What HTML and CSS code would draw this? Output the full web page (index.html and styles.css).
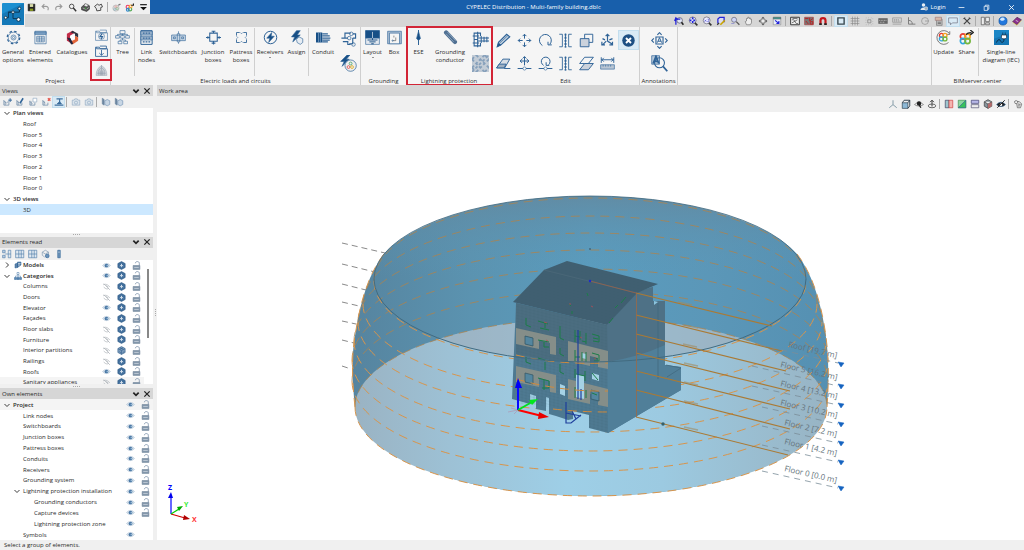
FILE: index.html
```html
<!DOCTYPE html>
<html lang="en">
<head>
<meta charset="utf-8">
<title>CYPELEC Distribution - Multi-family building.dblc</title>
<link rel="stylesheet" href="styles.css">
</head>
<body>
<svg class="defs" aria-hidden="true">
  <symbol id="logo" viewBox="0 0 24 24"><rect width="24" height="24" rx="1" fill="#1c8fd0" stroke="none"/><path d="M0 24V12L24 0v24z" fill="#1579b8" stroke="none"/><path d="M3 16h4V10h12V6h-2M12 10v7h5M7 10h5" stroke="#0c3350"/><g fill="#fff" stroke="#0c3350"><circle cx="4" cy="16" r="1.500"/><circle cx="12" cy="10" r="1.500"/><circle cx="19" cy="6" r="1.500"/><circle cx="18" cy="18" r="2"/></g></symbol>
  <symbol id="save" viewBox="0 0 16 16"><path d="M2 2h12v12H2z" fill="#222" stroke="#222"/><path d="M5 2h6v5H5z" fill="#d8dca8" stroke="none"/><path d="M5 10h6v4H5z" fill="#8a9a20" stroke="none"/></symbol>
  <symbol id="undo" viewBox="0 0 16 16"><path d="M6 2 2 6l4 4M2 6h7c4 0 5 4 3 7" stroke="#9a9a9a" stroke-width="2"/></symbol>
  <symbol id="redo" viewBox="0 0 16 16"><path d="m10 2 4 4-4 4M14 6H7c-4 0-5 4-3 7" stroke="#9a9a9a" stroke-width="2"/></symbol>
  <symbol id="mag" viewBox="0 0 16 16"><circle cx="6.500" cy="6" r="4" stroke="#444" stroke-width="1.600"/><path d="m9.500 9 5 5.500" stroke="#333" stroke-width="2.600"/></symbol>
  <symbol id="print" viewBox="0 0 16 16"><path d="M1 7l5-4 9 2v6l-5 4-9-3z" fill="#555" stroke="#222"/><path d="M5 5l2-4 6 2-2 4z" fill="#eee" stroke="#444"/><path d="M3 9l6 2M10 11l4-3" stroke="#ddd"/><circle cx="8" cy="9" r="1.500" fill="#3a8a3a" stroke="none"/></symbol>
  <symbol id="print2" viewBox="0 0 16 16"><path d="M1 6l5-4 3 2 4-2 2 5-3 1v5l-7 1-1-4z" fill="#e8e8e8" stroke="#333" stroke-width="1.500"/></symbol>
  <symbol id="ball" viewBox="0 0 16 16"><circle cx="7" cy="9" r="5.500" fill="#e0e0e0" stroke="#aaa"/><circle cx="7" cy="7" r="2" stroke="#e88"/><circle cx="9" cy="10" r="2" stroke="#7ab87a"/><circle cx="5" cy="11" r="2" stroke="#7ab"/><path d="M11 4l4-2" stroke="#777" stroke-width="2"/></symbol>
  <symbol id="ball2" viewBox="0 0 16 16"><circle cx="5" cy="7" r="3" stroke="#e36" stroke-width="2"/><circle cx="9" cy="11" r="3" stroke="#5a5" stroke-width="2"/><circle cx="5" cy="12" r="2.500" stroke="#38c" stroke-width="2"/><circle cx="10" cy="6" r="2.500" stroke="#fa3" stroke-width="2"/><path d="M11 4h4V1" stroke="#222" stroke-width="2"/></symbol>
  <symbol id="drop" viewBox="0 0 16 16"><path d="M2 3h12" stroke="#111" stroke-width="2"/><path d="M2 7h12l-6 6z" fill="#111" stroke="none"/></symbol>
  <symbol id="user" viewBox="0 0 16 16"><circle cx="7" cy="4" r="3.500" fill="#e8eef4" stroke="none"/><path d="M1 14c0-7 12-7 12 0z" fill="#dfe8f0" stroke="none"/><circle cx="12" cy="11" r="3.500" fill="#9ab" stroke="#fff"/></symbol>
  <symbol id="gear" viewBox="0 0 24 24"><circle cx="12" cy="12" r="8.500"/><circle cx="12" cy="12" r="10" stroke-dasharray="4 3.850" stroke-width="2"/><circle cx="12" cy="12" r="4"/><circle cx="12" cy="12" r="1.800"/></symbol>
  <symbol id="table" viewBox="0 0 24 24"><path d="M3 2h18v20H3z"/><path d="M3 3h18v4H3z" fill="#7fa3c6"/><path d="M6 10h12v9H6zM10 10v9M14 10v9M6 13h12M6 16h12"/></symbol>
  <symbol id="cat" viewBox="0 0 24 24"><path d="M12 1 3 6v11l5 3V9l8-5z" fill="#c22c48" stroke="none"/><path d="M12 1l9 5v6l-5-3V6L9 4z" fill="#30343f" stroke="none"/><path d="M21 12v5l-9 6-5-4 9-4V9z" fill="#e2653a" stroke="none"/><path d="M3 12l7 11 3-1-4-9z" fill="#24243c" stroke="none"/><path d="M9 9l6-1v6l-5 2z" fill="#fff" stroke="none"/></symbol>
  <symbol id="folderbolt" viewBox="0 0 24 24"><path d="M1 21V4h7l2 3h13v14zM3 4v3h18V2H9"/><circle cx="12" cy="13.500" r="5.500"/><path d="m13 9-4 5h5l-3 5" stroke-width="2"/></symbol>
  <symbol id="folderdown" viewBox="0 0 24 24"><path d="M1 21V4h7l2 3h13v14zM3 4v3h18V2H9M12 9v10M8 15l4 4 4-4" stroke-width="1.600"/></symbol>
  <symbol id="dome" viewBox="0 0 24 24"><path d="M2 21c0-9 4-15 10-18 6 3 10 9 10 18z" fill="#cfd4d9" stroke="#9faab5"/><path d="M7 21V11l5-4 5 4v10M10 21v-9M14 21v-9M12 2v19M4 17h16" stroke="#8795a3"/></symbol>
  <symbol id="treei" viewBox="0 0 24 24"><path d="M8 1h8v5H8zM1 9h6v4H1zM9 9h6v4H9zM17 9h6v4h-6zM12 6v3M4 9V7h16v2M12 13v3M5 18h6v4H5zM14 18h6v4h-6zM8 18v-2h9v2"/></symbol>
  <symbol id="link" viewBox="0 0 24 24"><path d="M3 1h18v22H3z" stroke-width="1.600"/><path d="M3 2h18v6H3zM3 10h18v6H3z" fill="#a9bdd2"/><path d="M6 5h12M6 13h12M6 19h12" stroke-width="2" stroke-dasharray="3 1.500"/></symbol>
  <symbol id="switch" viewBox="0 0 24 24"><path d="M1 8h22v9H1z" fill="#c9d7e5"/><path d="M4 11h3v3H4zM10 6h4v13h-4zM17 11h3v3h-3zM12 2v4M12 19v3"/></symbol>
  <symbol id="junction" viewBox="0 0 24 24"><path d="M6 5h12v13H6zM0 12h6M18 12h6M12 5V1M12 18v5M3 10v4M21 10v4M9 2h6M9 21h6" stroke-width="1.700"/></symbol>
  <symbol id="pattress" viewBox="0 0 24 24"><path d="M4 4h16v16H4z" stroke-width="1.400" stroke-dasharray="10 6" stroke-dashoffset="5"/><path d="m4 10 2 2-2 2M20 10l-2 2 2 2M10 4l2 2 2-2M10 20l2-2 2 2"/></symbol>
  <symbol id="bolt" viewBox="0 0 24 24"><circle cx="12" cy="12" r="10" stroke-width="1.600"/><path d="M14 4 6 13h5l-2 7 9-10h-5z" fill="#174f86"/></symbol>
  <symbol id="assign" viewBox="0 0 24 24"><path d="M12 1 4 11h5l-3 8L18 8h-5l5-7z" fill="#174f86"/><path d="M12 15l4-4 6 3v6l-4 3-5-3z" fill="#e7edf3"/></symbol>
  <symbol id="conduit" viewBox="0 0 24 24"><path d="M0 4h10v16H0z" fill="#174f86" stroke="none"/><path d="M4 4v16M7 4v16" stroke="#8fb0cf"/><path d="M10 6h9M10 9.500h12M10 13h13M10 16h12M10 19h9" stroke-width="2"/></symbol>
  <symbol id="route" viewBox="0 0 24 24"><path d="M2 10h5M7 10V3h8M7 10h4M18 4h4v6h-4M18 10v8h-5M4 15h7v4h4" stroke-width="1.600"/><circle cx="16" cy="4" r="2.500"/><circle cx="13" cy="10" r="2.500"/><circle cx="19" cy="19" r="2.500"/></symbol>
  <symbol id="boltball" viewBox="0 0 24 24"><path d="M10 0 1 9h5l-3 7L13 6H9l5-6z" fill="#174f86"/><circle cx="15" cy="15" r="8" fill="#eee"/><circle cx="12" cy="17" r="2" stroke="#d33"/><circle cx="17" cy="17" r="2" stroke="#dba400"/><circle cx="15" cy="12" r="2" stroke="#395"/></symbol>
  <symbol id="layout" viewBox="0 0 24 24"><path d="M1 1h22v22H1z" fill="#e4e9ef"/><path d="M1 1h22v12H1z" fill="#174f86"/><path d="M12 8v8M4 16h16M7 19h10M10 22h4" stroke="#174f86" stroke-width="1.500"/><path d="M12 3v10" stroke="#fff"/></symbol>
  <symbol id="box" viewBox="0 0 24 24"><path d="M1 2h22v20H1z" fill="#a9bdd2"/><path d="M4 5h16v17H4z" fill="#f5f5f5"/><path d="M9 17h5v-5M11 9v3" stroke="#555"/><circle cx="9" cy="17" r="1"/></symbol>
  <symbol id="ese" viewBox="0 0 24 24"><path d="M12 0v24" stroke-width="1.600"/><path d="M12 2l3 11-2 3h-2l-2-3z" fill="#174f86"/></symbol>
  <symbol id="rod" viewBox="0 0 24 24"><path d="M5 4l14 15" stroke="#4f6f92" stroke-width="7" stroke-linecap="round"/><path d="M5 6l12 13M7 3l13 14" stroke="#a9bdd2"/></symbol>
  <symbol id="mesh" viewBox="0 0 24 24"><path d="M3 3h5v18H3zM8 1v22M1 7h9M1 17h9M3 12h5" stroke-width="1.500"/><path d="M8 10h16M8 14h16M13 7v10M17 8v8M21 8v8" stroke-width="1.500"/><path d="M8 3h4v4M8 21h4v-4" stroke-width="1.500"/></symbol>
  <symbol id="plate" viewBox="0 0 24 24"><path d="M0 0h24v24H0z" fill="#c3ccd6" stroke="none"/><path d="m0 6 6-6M0 18 18 0M0 24 24 0M6 24 24 6M18 24l6-6M0 6l18 18M6 0l18 18M0 18l6 6M18 0l6 6" stroke="#86a0bb" stroke-width="2.500" stroke-dasharray="4 3"/></symbol>
  <symbol id="pencil" viewBox="0 0 24 24"><path d="m2 22 2-7L17 2l5 4L8 19z" stroke-width="1.800" fill="#c3d1df"/><path d="M2 22l2-6 4 3z" fill="#174f86"/><path d="M6 16 19 4"/></symbol>
  <symbol id="move" viewBox="0 0 24 24"><path d="M12 2v7M12 15v7M2 12h7M15 12h7M9 5l3-3 3 3M9 19l3 3 3-3M5 9l-3 3 3 3M19 9l3 3-3 3" stroke-width="1.600"/></symbol>
  <symbol id="rotate" viewBox="0 0 24 24"><path d="M7 20A9.500 9.500 0 1 1 19 18M22 19h-6v-5" stroke-width="1.600"/></symbol>
  <symbol id="mirror" viewBox="0 0 24 24"><path d="M2 2h5v20H2M22 2h-5v20h5M12 1v22" stroke-width="1.400"/><path d="M12 1v22" stroke-width="3" stroke-dasharray="3 2"/></symbol>
  <symbol id="copy" viewBox="0 0 24 24"><path d="M9 2h13v13H9z" stroke-width="1.500"/><path d="M2 9h14v13H2z" fill="#cbd2dc" stroke-width="1.500"/></symbol>
  <symbol id="axes" viewBox="0 0 24 24"><path d="M12 13V2M9 5l3-3 3 3M12 13l8 5M20 14v5h-5M10 13l-6 6M3 14v5h5M4 9l4 2M20 9l-5 2" stroke-width="1.900"/></symbol>
  <symbol id="cross" viewBox="0 0 24 24"><circle cx="12" cy="12" r="10" fill="#1d4f83" stroke="none"/><path d="m8 8 8 8M16 8l-8 8" stroke="#fff" stroke-width="3"/></symbol>
  <symbol id="eraser" viewBox="0 0 24 24"><path d="M1 19 11 5h11l-8 14z" fill="#d8dee5" stroke-width="1.500"/><path d="M1 19l4-6h11l-3 6zM13 20h10" fill="#9fb0c2" stroke-width="1.500"/></symbol>
  <symbol id="movenode" viewBox="0 0 24 24"><path d="M12 1v14M5 8h14M9 4l3-3 3 3M8 5L5 8l3 3M16 5l3 3-3 3M1 20h22" stroke-width="1.600"/><circle cx="12" cy="20" r="2.500" fill="#fff"/></symbol>
  <symbol id="rotnode" viewBox="0 0 24 24"><path d="M9 15a7 7 0 1 1 8-1M18 15h-5v-5M1 20h22" stroke-width="1.600"/><circle cx="12" cy="20" r="2.500" fill="#fff"/></symbol>
  <symbol id="planes" viewBox="0 0 24 24"><path d="M1 12 9 2h14l-8 10z" stroke-width="1.500"/><path d="M1 22l8-10h14l-8 10z" fill="#cbd2dc" stroke-width="1.500"/></symbol>
  <symbol id="measure" viewBox="0 0 24 24"><path d="M2 2v9M22 2v9M2 6h20M6 3 3 6l3 3M18 3l3 3-3 3" stroke-width="1.500"/><path d="M1 14h22v7H1z" fill="#bac6d4"/><path d="M5 14v3M9 14v3M13 14v3M17 14v3"/></symbol>
  <symbol id="amove" viewBox="0 0 24 24"><path d="M7 7h10v10H7zM9 4l3-3 3 3M9 20l3 3 3-3M4 9l-3 3 3 3M20 9l3 3-3 3" stroke-width="1.600"/><path d="m9 15 3-7 3 7M10 13h4" stroke-width="1.400"/></symbol>
  <symbol id="azoom" viewBox="0 0 24 24"><path d="M1 1h11v12H1z" fill="#b8cadb"/><circle cx="12" cy="11" r="7" stroke-width="1.500"/><path d="m3 12 4-10 4 10M5 9h5M17 16l6 7" stroke-width="2.500"/></symbol>
  <symbol id="rings" viewBox="0 0 24 24"><circle cx="8" cy="8" r="4.500" stroke="#e43d35" stroke-width="3"/><circle cx="16" cy="8" r="4.500" stroke="#f5a321" stroke-width="3"/><circle cx="8" cy="16" r="4.500" stroke="#31a6dc" stroke-width="3"/><circle cx="16" cy="16" r="4.500" stroke="#74b63e" stroke-width="3"/></symbol>
  <symbol id="update" viewBox="0 0 24 24"><path d="M20 20A11 11 0 1 1 21 5M22 2v5h-5" stroke="#333"/><use href="#rings" x="3" y="3" width="17" height="17"/></symbol>
  <symbol id="share" viewBox="0 0 24 24"><use href="#rings" x="-1" y="3" width="22" height="22"/><path d="M12 8c0-3 3-4 8-4M18 0l5 4-5 4" stroke="#222" stroke-width="2"/></symbol>
  <symbol id="plug" viewBox="0 0 24 24"><path d="M0 0h24v24H0z" fill="#1c86c6" stroke="none"/><path d="M0 14 24 5v19H0z" fill="#1575b3" stroke="none"/><path d="M12 8h8v4c0 3-8 3-8 0zM14 8V4M18 8V4" fill="#fff" stroke="#123"/><path d="M16 14c0 8-5 6-6 3s-4-2-6 3" stroke="#0b2740" stroke-width="1.500"/></symbol>
  <symbol id="zprev" viewBox="0 0 16 16"><circle cx="9" cy="7" r="4.500" fill="#dfe5f5" stroke="#445"/><path d="m12 10 3 4" stroke="#222" stroke-width="2.500"/><path d="M3 14V5h7M1 8l2-5 3 3" stroke="#2323d8" stroke-width="2"/></symbol>
  <symbol id="zext" viewBox="0 0 16 16"><circle cx="7.500" cy="7" r="5.500" fill="#dfe5f5" stroke="#556"/><path d="M7.500 2v10M2.500 7h10" stroke="#2323d8" stroke-width="2.500" stroke-dasharray="3 3"/><path d="m11 11 4 4" stroke="#333" stroke-width="2.500"/></symbol>
  <symbol id="zx2" viewBox="0 0 16 16"><circle cx="7.500" cy="7" r="5.500" fill="#eef" stroke="#556"/><path d="M4 6l3 3M7 6 4 9M9 5h2v2L9 9h2" stroke="#44c"/><path d="m11 11 4 4" stroke="#333" stroke-width="2.500"/></symbol>
  <symbol id="redraw" viewBox="0 0 16 16"><path d="M3 12V5l3-3h7v8" fill="#dde" stroke="#2323d8" stroke-width="2"/><path d="M7 14l7-7" stroke="#c9a400" stroke-width="2.500"/><path d="M2 14l3-3" stroke="#333" stroke-width="2"/></symbol>
  <symbol id="zwin" viewBox="0 0 16 16"><circle cx="6.500" cy="6" r="4" fill="#cfd5f5" stroke="#556"/><path d="m10 9 5 5" stroke="#555" stroke-width="2"/><path d="M2 12h5" stroke="#77c"/></symbol>
  <symbol id="hand" viewBox="0 0 16 16"><path d="M4 14 2 9l2-1V4h2V2h2v2l2-1v2h2v6l-2 3z" fill="#eee" stroke="#666"/></symbol>
  <symbol id="pan" viewBox="0 0 16 16"><path d="m8 1 3 3H5zM8 15l3-3H5zM1 8l3-3v6zM15 8l-3-3v6z" fill="#555" stroke="none"/><circle cx="8" cy="8" r="3.500" fill="#eee" stroke="#555"/></symbol>
  <symbol id="wins" viewBox="0 0 16 16"><path d="M2 2h12v3H2z" fill="#29a59b" stroke="#555"/><path d="M2 5h12v9H2z" fill="#e8eef8" stroke="#888"/><path d="M5 7l6 5M11 8v4H7" stroke="#2323d8" stroke-width="1.800"/></symbol>
  <symbol id="dxf" viewBox="0 0 16 16"><path d="M1 2h14v12H1z" fill="#eee" stroke="#333" stroke-width="1.500"/><path d="M3 6h3l4 6h3M3 11l9-5M4 4h8" stroke="#333"/></symbol>
  <symbol id="dxf2" viewBox="0 0 16 16"><path d="M1 2h14v12H1z" fill="#777" stroke="#a33"/><path d="M2 4h5M9 3v5l5-4M3 8l4 5M10 9h4v4h-4z" stroke="#b22" stroke-width="1.500"/></symbol>
  <symbol id="magnet" viewBox="0 0 16 16"><path d="M4 14V7c0-5 8-5 8 0v7" stroke="#c4161c" stroke-width="3.500"/><path d="M2 13h4M10 13h4" stroke="#222" stroke-width="2.500"/></symbol>
  <symbol id="sq" viewBox="0 0 16 16"><path d="M3 3h10v10H3z" stroke="#37474f" stroke-width="2.200"/></symbol>
  <symbol id="grid" viewBox="0 0 16 16"><path d="M1 4h14M1 8h14M1 12h14M4 1v14M8 1v14M12 1v14" stroke="#888"/></symbol>
  <symbol id="dotsq" viewBox="0 0 16 16"><path d="M6 6h5v5H6z" stroke="#777"/><path d="M3 3h11v11H3z" stroke="#999" stroke-dasharray="1 3"/></symbol>
  <symbol id="kbd" viewBox="0 0 16 16"><path d="M1 4h14v8H1z" fill="#666" stroke="#666"/><path d="M2 7h12M3 10h8" stroke="#ddd" stroke-dasharray="1.500 1"/></symbol>
  <symbol id="cote" viewBox="0 0 16 16"><path d="M1 3h14v7H1zM1 13h14" stroke="#888"/><path d="M3 6h9M3 8h10" stroke="#777" stroke-dasharray="2 1"/></symbol>
  <symbol id="ortho" viewBox="0 0 16 16"><path d="M4 2v11h11M4 7c4 0 6 2 6 6" stroke="#777" stroke-width="1.500"/></symbol>
  <symbol id="circ" viewBox="0 0 16 16"><circle cx="8" cy="8" r="5.500" stroke="#888"/><path d="M8 8h6" stroke="#888"/></symbol>
  <symbol id="info" viewBox="0 0 16 16"><path d="M4 5h9v10H4z" fill="#bbb" stroke="#777"/><path d="M2 2h10v5H2z" fill="#d8b8a8" stroke="#977"/><path d="M6 10h5M6 12h5" stroke="#555"/></symbol>
  <symbol id="chat" viewBox="0 0 16 16"><path d="M1 3h14v8H7l-3 3v-3H1z" stroke="#667"/></symbol>
  <symbol id="tools" viewBox="0 0 16 16"><path d="m3 3 10 10M13 3 3 13" stroke="#444" stroke-width="2"/><path d="M2 5l3-3M11 2l3 3" stroke="#444"/></symbol>
  <symbol id="panes" viewBox="0 0 16 16"><path d="M2 2h5v12H2zM9 2h6v7H9zM9 11h6v3H9z" stroke="#444" fill="#eee"/></symbol>
  <symbol id="globe" viewBox="0 0 16 16"><circle cx="8" cy="8" r="6.500" fill="#2277dd" stroke="#0b4e9f"/><path d="M3 5c3-4 7-3 8 0-2 3-6 4-8 0z" fill="#cfe8ff" stroke="none"/></symbol>
  <symbol id="book" viewBox="0 0 16 16"><path d="m1 9 7-7 7 4-7 8z" fill="#8a2f8a" stroke="#43204a"/><path d="m1 10 7 5 7-8" stroke="#e2c34a"/><path d="m6 7 4 2" stroke="#fff"/></symbol>
  <symbol id="viewadd" viewBox="0 0 16 16"><path d="M3 5v8h8V8M3 6l4 4 4-4M5 7v6" stroke="#7893ae" stroke-width="1.300"/><path d="M13 2v6M10 5h6" stroke="#2f6397" stroke-width="1.500"/></symbol>
  <symbol id="viewedit" viewBox="0 0 16 16"><path d="M3 5v8h8V9M3 6l4 4M5 7v6" stroke="#7893ae" stroke-width="1.300"/><path d="m8 10 5-8" stroke="#2f6397" stroke-width="2.500"/></symbol>
  <symbol id="viewcopy" viewBox="0 0 16 16"><path d="M3 6v7h8V9M3 7l4 4M5 7v6" stroke="#7893ae" stroke-width="1.300"/><path d="M8 2h6v6H8z" fill="#fff" stroke="#8ba5bf"/></symbol>
  <symbol id="viewdel" viewBox="0 0 16 16"><path d="M3 5v8h8V9M3 6l4 4M5 7v6" stroke="#7893ae" stroke-width="1.300"/><path d="m11 2 4 4M15 2l-4 4" stroke="#e6584f" stroke-width="2"/></symbol>
  <symbol id="viewsel" viewBox="0 0 16 16"><path d="M4 3h10M9 3v5M1 13h14" stroke="#3f6f9e" stroke-width="1.800"/><path d="M5 11l4-4 3 4z" fill="#3f6f9e"/></symbol>
  <symbol id="cam" viewBox="0 0 16 16"><path d="M2 5h3l1-2h4l1 2h3v8H2z" fill="#dbe4ec" stroke="#8ba5bf"/><circle cx="8" cy="9" r="2.500" stroke="#8ba5bf"/></symbol>
  <symbol id="cubeL" viewBox="0 0 16 16"><path d="M2 2v9l3 2V4z" fill="#6d86a0" stroke="#6d86a0"/><path d="m6 6 4-2 4 2v6l-4 2-4-2z" fill="#c8d6e4" stroke="#6d8fb2"/></symbol>
  <symbol id="blocks" viewBox="0 0 16 16"><path d="M1 2h4v4H1zM1 10h4v4H1zM5 8h5" fill="#bdd0e2" stroke="#4b7aa8"/><path d="M10 2h4v12h-4zM10 8h4" fill="#dfe8f0" stroke="#4b7aa8"/></symbol>
  <symbol id="blocks2" viewBox="0 0 16 16"><path d="M1 2h13v12H1zM6 2v12M10 2v12M1 8h13" fill="#dfe8f0" stroke="#4b7aa8"/></symbol>
  <symbol id="pin" viewBox="0 0 16 16"><path d="M6 2h4v12H6z" fill="#6f95ba"/><path d="M7 5h2" stroke="#fff"/></symbol>
  <symbol id="cubeeye" viewBox="0 0 16 16"><path d="m2 5 5-3 5 3v3M2 5v5l4 3M2 5l5 3 5-3" stroke="#7893ae"/><circle cx="10" cy="11" r="3" fill="#6f95ba"/></symbol>
  <symbol id="eye" viewBox="0 0 16 16"><path d="M1 8c4-5 10-5 14 0-4 5-10 5-14 0z" fill="#d7e2ec" stroke="#a9bdd0"/><circle cx="8" cy="8" r="3.300" fill="#4b79a6" stroke="none"/><circle cx="9.500" cy="8" r="1.500" fill="#9bbad6" stroke="none"/></symbol>
  <symbol id="noeye" viewBox="0 0 16 16"><path d="M2 5c4-2 8-1 12 4M3 3l11 11M3 9c4 4 7 4 9 2M7 6l4 3" stroke="#a9aeb4" stroke-width="1.200"/></symbol>
  <symbol id="hex" viewBox="0 0 16 16"><path d="m8 1 6.500 3.500v7L8 15l-6.500-3.500v-7z" fill="#426f9c" stroke="#2e5b87"/><path d="M8 5v6M5 9l3-2 3 2" stroke="#e3ebf3" stroke-width="1.500"/></symbol>
  <symbol id="hex2" viewBox="0 0 16 16"><path d="m8 1 6.500 3.500v7L8 15l-6.500-3.500v-7z" fill="#7b9cbd" stroke="#2e5b87"/><path d="m2 5 6 3 6-3M8 8v7M4 10l3 2M10 12l3-2M5 3l6 3M11 3 5 6" stroke="#2e5b87"/></symbol>
  <symbol id="lock" viewBox="0 0 16 16"><path d="M6 4c0-4 7-4 7 0v4" stroke="#8096ac" stroke-width="1.500"/><path d="M2 8h12v7H2z" fill="#8397ab" stroke="#6d8398"/><path d="M4 11.500h8" stroke="#d5dde5" stroke-width="1.200"/></symbol>
  <symbol id="open" viewBox="0 0 12 12"><path d="m1 4 5 5 5-5" stroke="#333" stroke-width="1.900"/></symbol>
  <symbol id="shut" viewBox="0 0 12 12"><path d="m4 1 5 5-5 5" stroke="#333" stroke-width="1.900"/></symbol>
  <symbol id="close" viewBox="0 0 12 12"><path d="m2 2 8 8M10 2l-8 8" stroke="#222" stroke-width="1.900"/></symbol>
  <symbol id="caret" viewBox="0 0 12 12"><path d="m2 4 4 4 4-4" stroke="#222" stroke-width="2.600"/></symbol>
  <symbol id="model" viewBox="0 0 16 16"><path d="M2 6l5-2v9l-5 1zM7 2h7v6l-7 5z" fill="#5b82a9"/><path d="M8 5h5M8 8h4" stroke="#fff"/></symbol>
  <symbol id="cats" viewBox="0 0 16 16"><path d="M6 1h4v4H6zM8 5v5M3 11V8h10v3" stroke="#4677a5"/><path d="M1 11h4v4H1zM6 11h4v4H6zM11 11h4v4h-4z" fill="#5b8ab6"/></symbol>
  <symbol id="min" viewBox="0 0 12 12"><path d="M1 6h10" stroke="#fff" stroke-width="1.300"/></symbol>
  <symbol id="restore" viewBox="0 0 12 12"><path d="M2 4h6v7H2zM4 4V2h6v7H8" stroke="#fff" stroke-width="1.200"/></symbol>
  <symbol id="quit" viewBox="0 0 12 12"><path d="m2 2 8 8M10 2l-8 8" stroke="#fff" stroke-width="1.500"/></symbol>
  <symbol id="tri" viewBox="0 0 16 16"><path d="M8 2v7l-6 5M8 9l6 5" stroke="#6d8998" stroke-width="1.300"/></symbol>
  <symbol id="cube" viewBox="0 0 16 16"><path d="M2 6h9v9H2z" fill="#8db8d6" stroke="#234"/><path d="m2 6 3-4h9v9l-3 4M11 6l3-4" stroke="#234" stroke-width="1.400"/></symbol>
  <symbol id="orbit" viewBox="0 0 16 16"><path d="M1 9c4-5 10-5 14 0-4 3-10 3-14 0z" stroke="#555"/><circle cx="8" cy="7" r="3.500" fill="#222" stroke="none"/><path d="m8 9 3 5" stroke="#222" stroke-width="2"/></symbol>
  <symbol id="turn" viewBox="0 0 16 16"><path d="M8 2v10M5 5l3-3 3 3" stroke="#333" stroke-width="1.500"/><ellipse cx="8" cy="11" rx="6" ry="3" stroke="#555" stroke-width="1.400"/></symbol>
  <symbol id="cutx" viewBox="0 0 16 16"><path d="M2 2h6v12H2z" fill="#9ec6cf" stroke="#335"/><path d="M8 2h6v12H8z" fill="#f4b5b0" stroke="#c33"/></symbol>
  <symbol id="cuty" viewBox="0 0 16 16"><path d="M2 2h12v12H2z" fill="#8fd6a0" stroke="#384"/><path d="M2 14 14 2v12z" fill="#38c25a"/></symbol>
  <symbol id="cutz" viewBox="0 0 16 16"><path d="M2 2h12v5H2z" fill="#b8b8e8" stroke="#336"/><path d="M2 9h12v5H2z" fill="#eee" stroke="#446"/></symbol>
  <symbol id="solid" viewBox="0 0 16 16"><path d="m8 1 6 3.500v7L8 15l-6-3.500v-7zM2 4.500 8 8l6-3.500M8 8v7" fill="#87949c" stroke="#333"/><path d="m8 8 6-3v6l-6 4z" fill="#b66a6a" stroke="none"/></symbol>
  <symbol id="hide" viewBox="0 0 16 16"><path d="M1 9c4-5 10-5 14 0-4 4-10 4-14 0z" fill="#222"/><circle cx="8" cy="9" r="2" fill="#fff" stroke="none"/><path d="M2 14 14 2" stroke="#222" stroke-width="1.500"/></symbol>
  <symbol id="scroll" viewBox="0 0 16 16"><path d="M3 4h7l4 4-2 6-5 0-1-6z" fill="#ddd" stroke="#555"/><circle cx="5" cy="5" r="2.500" fill="#eee" stroke="#555"/><path d="M8 8l4 1M8 11h3" stroke="#555"/></symbol>
</svg>

<header class="top">
  <button class="app" aria-label="File"><svg><use href="#logo"/></svg></button>
  <div class="bars">
    <div class="titlebar">
      <div class="quick">
        <button aria-label="Save"><svg><use href="#save"/></svg></button><button aria-label="Undo"><svg><use href="#undo"/></svg></button><button aria-label="Redo"><svg><use href="#redo"/></svg></button><button aria-label="Find"><svg><use href="#mag"/></svg></button><button aria-label="Print"><svg><use href="#print"/></svg></button><button aria-label="Printers"><svg><use href="#print2"/></svg></button><i class="sep"></i><button aria-label="Import"><svg><use href="#ball"/></svg></button><button aria-label="Export"><svg><use href="#ball2"/></svg></button><button aria-label="More"><svg><use href="#drop"/></svg></button>
      </div>
      <h1>CYPELEC Distribution - Multi-family building.dblc</h1>
      <button class="login"><svg><use href="#user"/></svg>Login</button>
      <div class="wm"><button aria-label="Minimise"><svg><use href="#min"/></svg></button><button aria-label="Restore"><svg><use href="#restore"/></svg></button><button aria-label="Close"><svg><use href="#quit"/></svg></button></div>
    </div>
    <div class="toolbar">
      <button aria-label="Previous view"><svg><use href="#zprev"/></svg></button><button aria-label="Extents"><svg><use href="#zext"/></svg></button><button aria-label="Double"><svg><use href="#zx2"/></svg></button><button aria-label="Redraw"><svg><use href="#redraw"/></svg></button><button aria-label="Window"><svg><use href="#zwin"/></svg></button><button aria-label="Hand"><svg><use href="#hand"/></svg></button><button aria-label="Pan"><svg><use href="#pan"/></svg></button><button aria-label="Windows"><svg><use href="#wins"/></svg></button><i class="sep"></i><button aria-label="Template"><svg><use href="#dxf"/></svg></button><button aria-label="Layers"><svg><use href="#dxf2"/></svg></button><button aria-label="Snap"><svg><use href="#magnet"/></svg></button><i class="sep"></i><button class="on" aria-label="Frame"><svg><use href="#sq"/></svg></button><button aria-label="Grid"><svg><use href="#grid"/></svg></button><button aria-label="Grid snap"><svg><use href="#dotsq"/></svg></button><button aria-label="Keyboard"><svg><use href="#kbd"/></svg></button><button aria-label="Dimension"><svg><use href="#cote"/></svg></button><button aria-label="Orthogonal"><svg><use href="#ortho"/></svg></button><button aria-label="Circle"><svg><use href="#circ"/></svg></button><button aria-label="Information"><svg><use href="#info"/></svg></button><button class="on" aria-label="Comment"><svg><use href="#chat"/></svg></button><button aria-label="Settings"><svg><use href="#tools"/></svg></button><i class="sep"></i><button aria-label="Panes"><svg><use href="#panes"/></svg></button><i class="sep"></i><button aria-label="Language"><svg><use href="#globe"/></svg></button><button aria-label="Help"><svg><use href="#book"/></svg></button>
    </div>
  </div>
</header>

<section class="ribbon" aria-label="Tools">
  <div class="group w111">
    <div class="tools">
      <button class="tool w26"><svg><use href="#gear"/></svg>General<br>options</button>
      <button class="tool w28"><svg><use href="#table"/></svg>Entered<br>elements</button>
      <button class="tool w36"><svg><use href="#cat"/></svg>Catalogues</button>
      <i class="rule"></i>
      <div class="stack three"><button aria-label="Electric file"><svg><use href="#folderbolt"/></svg></button><button aria-label="Import file"><svg><use href="#folderdown"/></svg></button><button class="flag" aria-label="Protection zone"><svg><use href="#dome"/></svg></button></div>
    </div>
    <h2>Project</h2>
  </div>
  <div class="group w250">
    <div class="tools">
      <button class="tool w23"><svg><use href="#treei"/></svg>Tree</button>
      <i class="rule"></i>
      <button class="tool w23"><svg><use href="#link"/></svg>Link<br>nodes</button>
      <button class="tool w40"><svg><use href="#switch"/></svg>Switchboards</button>
      <button class="tool w30"><svg><use href="#junction"/></svg>Junction<br>boxes</button>
      <button class="tool w26"><svg><use href="#pattress"/></svg>Pattress<br>boxes</button>
      <i class="rule"></i>
      <button class="tool w30 more"><svg><use href="#bolt"/></svg>Receivers</button>
      <button class="tool w23"><svg><use href="#assign"/></svg>Assign</button>
      <i class="rule"></i>
      <button class="tool w28"><svg><use href="#conduit"/></svg>Conduit</button>
      <div class="stack two"><button aria-label="Route"><svg><use href="#route"/></svg></button><button aria-label="Circuits"><svg><use href="#boltball"/></svg></button></div>
    </div>
    <h2>Electric loads and circuits</h2>
  </div>
  <div class="group w46">
    <div class="tools">
      <button class="tool w23 more"><svg><use href="#layout"/></svg>Layout</button>
      <button class="tool w20"><svg><use href="#box"/></svg>Box</button>
    </div>
    <h2>Grounding</h2>
  </div>
  <div class="group marked">
    <div class="tools">
      <button class="tool w23"><svg><use href="#ese"/></svg>ESE</button>
      <button class="tool w40"><svg><use href="#rod"/></svg>Grounding<br>conductor</button>
      <div class="stack two"><button aria-label="Mesh"><svg><use href="#mesh"/></svg></button><button aria-label="Plate"><svg><use href="#plate"/></svg></button></div>
    </div>
    <h2>Lightning protection</h2>
  </div>
  <div class="group w148">
    <div class="editgrid">
      <button aria-label="Edit"><svg><use href="#pencil"/></svg></button><button aria-label="Move"><svg><use href="#move"/></svg></button><button aria-label="Rotate"><svg><use href="#rotate"/></svg></button><button aria-label="Mirror"><svg><use href="#mirror"/></svg></button><button aria-label="Copy"><svg><use href="#copy"/></svg></button><button aria-label="Axes"><svg><use href="#axes"/></svg></button><button class="on" aria-label="Delete"><svg><use href="#cross"/></svg></button>
      <button aria-label="Erase"><svg><use href="#eraser"/></svg></button><button aria-label="Move node"><svg><use href="#movenode"/></svg></button><button aria-label="Rotate node"><svg><use href="#rotnode"/></svg></button><button aria-label="Mirror copy"><svg><use href="#mirror"/></svg></button><button aria-label="Copy to floor"><svg><use href="#planes"/></svg></button><button aria-label="Measure"><svg><use href="#measure"/></svg></button>
    </div>
    <h2>Edit</h2>
  </div>
  <div class="group w38">
    <div class="editgrid one"><button aria-label="Move text"><svg><use href="#amove"/></svg></button><button aria-label="Find text"><svg><use href="#azoom"/></svg></button></div>
    <h2>Annotations</h2>
  </div>
  <div class="group bim">
    <div class="tools">
      <button class="tool w23"><svg><use href="#update"/></svg>Update</button>
      <button class="tool w23"><svg><use href="#share"/></svg>Share</button>
      <i class="rule"></i>
      <button class="tool w44"><svg><use href="#plug"/></svg>Single-line<br>diagram (IEC)</button>
    </div>
    <h2>BIMserver.center</h2>
  </div>
</section>

<main>
  <aside>
    <section class="panel">
      <header><h3>Views</h3><button aria-label="Collapse"><svg><use href="#caret"/></svg></button><button aria-label="Close"><svg><use href="#close"/></svg></button></header>
      <div class="ptools"><button aria-label="Add"><svg><use href="#viewadd"/></svg></button><button aria-label="Edit"><svg><use href="#viewedit"/></svg></button><button aria-label="Copy"><svg><use href="#viewcopy"/></svg></button><button aria-label="Delete"><svg><use href="#viewdel"/></svg></button><button class="on" aria-label="Select"><svg><use href="#viewsel"/></svg></button><i class="sep"></i><button aria-label="Capture"><svg><use href="#cam"/></svg></button><button aria-label="Captures"><svg><use href="#cam"/></svg></button><i class="sep"></i><button aria-label="Save view"><svg><use href="#cubeL"/></svg></button><button aria-label="Load view"><svg><use href="#cubeL"/></svg></button></div>
      <div class="scrollbox">
        <ul class="tree views">
          <li class="root"><svg><use href="#open"/></svg><b>Plan views</b></li>
          <li>Roof</li><li>Floor 5</li><li>Floor 4</li><li>Floor 3</li><li>Floor 2</li><li>Floor 1</li><li>Floor 0</li>
          <li class="root"><svg><use href="#open"/></svg><b>3D views</b></li>
          <li class="sel">3D</li>
        </ul>
      </div>
      <div class="grip"></div>
    </section>
    <section class="panel">
      <header><h3>Elements read</h3><button aria-label="Collapse"><svg><use href="#caret"/></svg></button><button aria-label="Close"><svg><use href="#close"/></svg></button></header>
      <div class="ptools"><button aria-label="Expand"><svg><use href="#blocks"/></svg></button><button aria-label="Group"><svg><use href="#blocks2"/></svg></button><button aria-label="Ungroup"><svg><use href="#blocks2"/></svg></button><button aria-label="Show"><svg><use href="#cubeeye"/></svg></button><button aria-label="Pin"><svg><use href="#pin"/></svg></button></div>
      <div class="scrollbox">
        <ul class="tree read">
          <li class="root"><svg><use href="#shut"/></svg><svg><use href="#model"/></svg><b>Models</b><button aria-label="Visible"><svg><use href="#eye"/></svg></button><button aria-label="Solid"><svg><use href="#hex"/></svg></button><button aria-label="Lock"><svg><use href="#lock"/></svg></button></li>
          <li class="root"><svg><use href="#open"/></svg><svg><use href="#cats"/></svg><b>Categories</b><button aria-label="Visible"><svg><use href="#eye"/></svg></button><button aria-label="Solid"><svg><use href="#hex"/></svg></button><button aria-label="Lock"><svg><use href="#lock"/></svg></button></li>
          <li><span>Columns</span><button aria-label="Visible"><svg><use href="#noeye"/></svg></button><button aria-label="Solid"><svg><use href="#hex"/></svg></button><button aria-label="Lock"><svg><use href="#lock"/></svg></button></li>
          <li><span>Doors</span><button aria-label="Visible"><svg><use href="#noeye"/></svg></button><button aria-label="Solid"><svg><use href="#hex"/></svg></button><button aria-label="Lock"><svg><use href="#lock"/></svg></button></li>
          <li><span>Elevator</span><button aria-label="Visible"><svg><use href="#eye"/></svg></button><button aria-label="Solid"><svg><use href="#hex"/></svg></button><button aria-label="Lock"><svg><use href="#lock"/></svg></button></li>
          <li><span>Façades</span><button aria-label="Visible"><svg><use href="#eye"/></svg></button><button aria-label="Solid"><svg><use href="#hex"/></svg></button><button aria-label="Lock"><svg><use href="#lock"/></svg></button></li>
          <li><span>Floor slabs</span><button aria-label="Visible"><svg><use href="#noeye"/></svg></button><button aria-label="Solid"><svg><use href="#hex"/></svg></button><button aria-label="Lock"><svg><use href="#lock"/></svg></button></li>
          <li><span>Furniture</span><button aria-label="Visible"><svg><use href="#noeye"/></svg></button><button aria-label="Solid"><svg><use href="#hex"/></svg></button><button aria-label="Lock"><svg><use href="#lock"/></svg></button></li>
          <li><span>Interior partitions</span><button aria-label="Visible"><svg><use href="#noeye"/></svg></button><button aria-label="Solid"><svg><use href="#hex2"/></svg></button><button aria-label="Lock"><svg><use href="#lock"/></svg></button></li>
          <li><span>Railings</span><button aria-label="Visible"><svg><use href="#noeye"/></svg></button><button aria-label="Solid"><svg><use href="#hex"/></svg></button><button aria-label="Lock"><svg><use href="#lock"/></svg></button></li>
          <li><span>Roofs</span><button aria-label="Visible"><svg><use href="#eye"/></svg></button><button aria-label="Solid"><svg><use href="#hex"/></svg></button><button aria-label="Lock"><svg><use href="#lock"/></svg></button></li>
          <li class="hover"><span>Sanitary appliances</span><button aria-label="Visible"><svg><use href="#noeye"/></svg></button><button aria-label="Solid"><svg><use href="#hex"/></svg></button><button aria-label="Lock"><svg><use href="#lock"/></svg></button></li>
        </ul>
        <div class="track"><i></i></div>
      </div>
      <div class="grip"></div>
    </section>
    <section class="panel">
      <header><h3>Own elements</h3><button aria-label="Collapse"><svg><use href="#caret"/></svg></button><button aria-label="Close"><svg><use href="#close"/></svg></button></header>
      <div class="scrollbox">
        <ul class="tree own">
          <li class="root hover"><svg><use href="#open"/></svg><b>Project</b><button aria-label="Visible"><svg><use href="#eye"/></svg></button><button aria-label="Lock"><svg><use href="#lock"/></svg></button></li>
          <li><span>Link nodes</span><button aria-label="Visible"><svg><use href="#eye"/></svg></button><button aria-label="Lock"><svg><use href="#lock"/></svg></button></li>
          <li><span>Switchboards</span><button aria-label="Visible"><svg><use href="#eye"/></svg></button><button aria-label="Lock"><svg><use href="#lock"/></svg></button></li>
          <li><span>Junction boxes</span><button aria-label="Visible"><svg><use href="#eye"/></svg></button><button aria-label="Lock"><svg><use href="#lock"/></svg></button></li>
          <li><span>Pattress boxes</span><button aria-label="Visible"><svg><use href="#eye"/></svg></button><button aria-label="Lock"><svg><use href="#lock"/></svg></button></li>
          <li><span>Conduits</span><button aria-label="Visible"><svg><use href="#eye"/></svg></button><button aria-label="Lock"><svg><use href="#lock"/></svg></button></li>
          <li><span>Receivers</span><button aria-label="Visible"><svg><use href="#eye"/></svg></button><button aria-label="Lock"><svg><use href="#lock"/></svg></button></li>
          <li><span>Grounding system</span><button aria-label="Visible"><svg><use href="#eye"/></svg></button><button aria-label="Lock"><svg><use href="#lock"/></svg></button></li>
          <li class="branch"><svg><use href="#open"/></svg><span>Lightning protection installation</span><button aria-label="Visible"><svg><use href="#eye"/></svg></button><button aria-label="Lock"><svg><use href="#lock"/></svg></button></li>
          <li class="leaf"><span>Grounding conductors</span><button aria-label="Visible"><svg><use href="#eye"/></svg></button><button aria-label="Lock"><svg><use href="#lock"/></svg></button></li>
          <li class="leaf"><span>Capture devices</span><button aria-label="Visible"><svg><use href="#eye"/></svg></button><button aria-label="Lock"><svg><use href="#lock"/></svg></button></li>
          <li class="leaf nolock"><span>Lightning protection zone</span><button aria-label="Visible"><svg><use href="#eye"/></svg></button></li>
          <li class="nolock"><span>Symbols</span><button aria-label="Visible"><svg><use href="#eye"/></svg></button></li>
        </ul>
      </div>
    </section>
  </aside>
  <div class="vgrip"></div>
  <section class="work">
    <header><h3>Work area</h3></header>
    <div class="wtools"><button aria-label="Axes"><svg><use href="#tri"/></svg></button><button aria-label="Cube"><svg><use href="#cube"/></svg></button><button aria-label="Orbit"><svg><use href="#orbit"/></svg></button><button aria-label="Turn"><svg><use href="#turn"/></svg></button><i class="sep"></i><button aria-label="Section X"><svg><use href="#cutx"/></svg></button><button aria-label="Section Y"><svg><use href="#cuty"/></svg></button><button aria-label="Section Z"><svg><use href="#cutz"/></svg></button><button aria-label="Solid"><svg><use href="#solid"/></svg></button><button aria-label="Hide"><svg><use href="#hide"/></svg></button><i class="sep"></i><button aria-label="Notes"><svg><use href="#scroll"/></svg></button></div>
    <svg class="scene" viewBox="157 112 867 428" role="img" aria-label="3D view of the building">
      <defs>
        <linearGradient id="wall" x1="352" x2="829" y1="0" y2="0" gradientUnits="userSpaceOnUse"><stop offset="0" stop-color="#56849f"/><stop offset=".25" stop-color="#5b93b0"/><stop offset=".5" stop-color="#5a9cbe"/><stop offset=".75" stop-color="#5b97b8"/><stop offset="1" stop-color="#5590b2"/></linearGradient>
        <linearGradient id="wallv" x1="0" x2="0" y1="196" y2="330" gradientUnits="userSpaceOnUse"><stop offset="0" stop-color="#64869b" stop-opacity=".7"/><stop offset=".6" stop-color="#5c98b8" stop-opacity="0"/></linearGradient>
        <linearGradient id="floor" x1="355" x2="827" y1="0" y2="0" gradientUnits="userSpaceOnUse"><stop offset="0" stop-color="#9ab3c3"/><stop offset=".2" stop-color="#9dc1d5"/><stop offset=".45" stop-color="#9ecfe7"/><stop offset=".65" stop-color="#9ccae1"/><stop offset="1" stop-color="#98b4c4"/></linearGradient>
        <clipPath id="base"><ellipse cx="591" cy="407" rx="236" ry="89"/></clipPath>
        <pattern id="tiles" width="4" height="3" patternUnits="userSpaceOnUse" patternTransform="skewY(14)"><path d="M0 0h4M2 0v3" stroke="#3d5e70" stroke-opacity=".3" stroke-width=".6"/></pattern>
      </defs>
      <g stroke="#8a8a8a" stroke-dasharray="6 4" fill="none">
        <path d="M342 243l43 10M342 264l33 8M342 284l24 6M342 302l17 4M342 321l14 3M342 340l12 3M342 366l6 2"/>
      </g>
      <path d="M590 196C492 196 412 222 384 254C370 272 361 298 356 330C351 355 352 380 355 407C364 457 460 496 591 496C722 496 818 457 827 407C829 380 829 355 825 330C820 298 811 272 797 254C768 222 688 196 590 196Z" fill="url(#wall)"/>
      <ellipse cx="590" cy="279" rx="216" ry="83" fill="url(#wallv)"/>
      <ellipse cx="591" cy="407" rx="236" ry="89" fill="url(#floor)"/>
      <ellipse cx="590" cy="279" rx="216" ry="83" fill="#9ba5b0" fill-opacity=".45" clip-path="url(#base)"/>
      <g fill="none" stroke="#ab8350" stroke-opacity=".8" stroke-dasharray="9 6">
        <path d="M374 281A216 83 0 0 1 806 281"/><path d="M363 304A227 88 0 0 1 817 304"/><path d="M358 322A232 89 0 0 1 822 322"/><path d="M354 341A236 91 0 0 1 826 341"/><path d="M352 360A238 91 0 0 1 828 360"/><path d="M352 381A238 90 0 0 1 828 381"/><path d="M355 407A236 89 0 0 1 827 407"/>
      </g>
      <g fill="none" stroke="#d8954c" stroke-dasharray="9 6">
        <path d="M374 281A216 83 0 0 0 806 281"/><path d="M363 304A227 88 0 0 0 817 304"/><path d="M358 322A232 89 0 0 0 822 322"/><path d="M354 341A236 91 0 0 0 826 341"/><path d="M352 360A238 91 0 0 0 828 360"/><path d="M352 381A238 90 0 0 0 828 381"/><path d="M355 407A236 89 0 0 0 827 407"/>
        <path d="M384 254C370 272 361 298 356 330C351 355 352 380 355 407M797 254C811 272 820 298 825 330C829 355 829 380 827 407"/>
      </g>
      <path d="M516 303l91 22 30-33 16-5v14h12v64l16 2v23l-73 43-19-5v-13l-16-4v8l-5 1-12-4-7-2v-16l-3-1v14l-10-2v-13l-6-2v10l-18-5z" fill="#4e7991"/>
      <path d="M607 325l30-33 16-5v14h12v64l16 2v23l-73 43z" fill="#507f99"/>
      <path d="M607 325l30-33 16-5v14h12v44q-26 12-58 17z" fill="#4e7186" />
      <path d="M516 303l91 22 1 36q-48 3-92-7z" fill="#4b6d80"/>
      <path d="M516 303l91 22 1 108-19-5v-13l-37-8-36-4z" fill="url(#tiles)"/>
      <path d="M513 302l31-32 23-9 91 23-21 9-30 32z" fill="#405f71"/>
      <path d="M513 302l31-32 23-9 91 23-21 9-30 32z" fill="url(#tiles)"/>
      <path d="M544 270l93 23" stroke="#4b6879" stroke-width=".8"/>
      <path d="M654 301l4 1-4 3z" fill="#8cc5df"/>
      <path d="M658 303v76M666 365l15 3-14 9" stroke="#41677c" stroke-width=".7" fill="none"/>
      <g fill="#858e89"><path fill-rule="evenodd" d="M516 328l40 9v18l-6-1v-11l-11-3v9l-23-5zm9 8v8l8 2v-8zM568 341l40 10v18l-10-2v-9l-8-2v10l-22-5zM516 366l40 9v18l-6-1v-11l-11-3v9l-23-5zm9 8v8l8 2v-8zM568 379l40 10v18l-10-2v-9l-8-2v10l-22-5z"/></g>
      <g fill="#a5d2e5"><path d="M576 374l8 2v23l-8-2zM592 373l7 2v6l-7-2zM560 384l5 2v10l-5-2zM582 353l4 1v5l-4-1z"/></g>
      <path d="M591 390l8 2v9l-8-2zM525 373l8 2v9l-8-2zM525 336l8 2v8l-8-2z" fill="#54869f" stroke="#315463" stroke-width=".7"/>
      <path d="M526 318v7l5 2M538 321l10 3M540 328l9 2M545 323v5M560 326v12l4 2M575 330v12M580 331v9M586 333v11M575 336l5 1M582 341l4 1M592 334l7 2v6l-6-1M593 338l5 1M538 340l11 2M544 342v5h5M560 348v6l4 2M575 350v11M582 352v9M586 352v10M575 357h5M592 353l7 2v6h-5M594 358l4 1M538 358l10 3M545 362v8M526 357v5l5 2M560 364v8l4 2M575 369v9M585 371v10M576 374l9 2M592 373l6 7M538 378l11 3M544 380v10M549 381v7h-7M575 387v11M586 390v8M592 393l5 2M569 304l2 2M572 311v3M587 293l1 3M615 308l3-3M621 303l5-6M609 323l4-5" stroke="#1c7d49" fill="none"/>
      <path d="M544 322l3 1M546 340l2 1M580 337l2 1M594 358l2 1M570 303v2M591 306l2 1" stroke="#b54b56" stroke-width=".8"/>
      <path d="M578 330v69M581 389v11M566 402v21h5l10-8M566 413l15 3M572 411l4 8" stroke="#1f3f9c" stroke-width="1.200" fill="none"/>
      <g fill="none" stroke="#d08a3c" stroke-dasharray="9 6"><path d="M516 355q40 10 92 8M516 379q45 13 92 12M553 409q26 3 55 3"/></g>
      <path d="M374 279A216 83 0 0 0 806 279" fill="none" stroke="#426b80"/>
      <path d="M374 279A216 83 0 0 1 806 279" fill="none" stroke="#41687d" stroke-width=".8"/>
      <g fill="none" stroke="#aa7a35" stroke-width="1.200"><path d="M590 281l46 12" stroke="#9a6248" stroke-width=".8"/><path d="M636 293l136 33M636 315l146 36M636 334l150 37M636 353l154 38M636 371l154 38M636 390l154 39M636 417l152 38"/><path d="M636.500 293v124" stroke="#9a6a48" stroke-width=".8"/></g>
      <path d="M678 302l14 3M684 325l14 3M683 344l14 3M684 363l14 3M684 382l14 3M684 401l14 3M684 427l14 3" stroke="#a08a60" stroke-opacity=".6" stroke-width="1.500"/>
      <circle cx="590" cy="281" r="1.200" fill="#1c28d0"/><circle cx="590" cy="249" r=".8" fill="#345"/><circle cx="663" cy="424" r="1.700" fill="#35616c"/>
      <g stroke="#7b8d98" stroke-opacity=".8" stroke-dasharray="6 5"><path d="M760 345l78 18M752 366l86 20M752 386l86 19M762 407l76 17M762 426l76 17M762 445l76 17M762 471l76 17"/></g>
      <g class="levels">
        <text transform="translate(788 347) rotate(13)">Roof [19.7 m]</text>
        <text transform="translate(780 367) rotate(13)">Floor 5 [16.2 m]</text>
        <text transform="translate(780 386) rotate(13)">Floor 4 [13.2 m]</text>
        <text transform="translate(780 405) rotate(13)">Floor 3 [10.2 m]</text>
        <text transform="translate(784 425) rotate(13)">Floor 2 [7.2 m]</text>
        <text transform="translate(784 444) rotate(13)">Floor 1 [4.2 m]</text>
        <text transform="translate(784 471) rotate(13)">Floor 0 [0.0 m]</text>
      </g>
      <path d="M838 362l6 1-3 4zM838 384l6 1-3 4zM838 403l6 1-3 4zM838 422l6 1-3 4zM838 441l6 1-3 4zM838 460l6 1-3 4zM838 486l6 1-3 4z" fill="#1463c0" stroke="#1463c0" stroke-width=".5"/>
      <path d="M508 412l10-2-7-2M518 410l-4 4" stroke="#a9a5c0" fill="none"/>
      <path d="M518 410v-24" stroke="#0a0aff" stroke-width="2"/><path d="M515 388l3-10 4 10z" fill="#0000f5"/>
      <path d="M518 410l24 6" stroke="#ff0000" stroke-width="2"/><path d="M539 412l10 5-11 2z" fill="#e90000"/>
      <path d="M518 410l14-8" stroke="#00e020" stroke-width="2"/><path d="M529 400l9-1-6 6z" fill="#00e81c"/>
      <g fill="none" stroke-width="1.200"><path d="M171 514v-16" stroke="#00f"/><path d="M171 514l14 4" stroke="#d00000"/><path d="M171 514l8-5" stroke="#0c0"/></g>
      <path d="M168 498l3-6 2 6z" fill="#00e"/><path d="M184 515l6 4-7 1z" fill="#b00000"/><path d="M177 507l6-1-4 5z" fill="#0a0"/>
      <g class="axis"><text x="168" y="490" fill="#00f">Z</text><text x="184" y="507" fill="#3e3">Y</text><text x="192" y="522" fill="#f33">X</text></g>
    </svg>
  </section>
</main>
<footer>Select a group of elements.</footer>
</body>
</html>
```
FILE: styles.css
```css
* { box-sizing: border-box; }
body { margin: 0; min-height: 100vh; display: flex; flex-direction: column; background: #f0f0f0; color: #2a2a2a; font: 6px/8px "Open Sans", "Noto Sans", sans-serif; }
button { font: inherit; color: inherit; border: 0; padding: 0; margin: 0; background: none; display: flex; align-items: center; justify-content: center; }
svg { fill: none; stroke: #2f6397; width: 10px; height: 10px; display: block; flex: none; }
.defs { width: 0; height: 0; position: absolute; }
h1, h2, h3 { margin: 0; font: inherit; }
.on { background: #d9eaf5; outline: 1px solid #c3deee; outline-offset: -1px; }
.sep { width: 1px; height: 10px; margin: 0 2px 0 1px; flex: none; background: #aaa; }

.top { display: flex; height: 27px; }
.app { width: 25px; }
.app svg { width: 22px; height: 22px; }
.bars { flex: 1; display: flex; flex-direction: column; }
.titlebar { display: flex; align-items: center; height: 14px; background: #185fab; color: #fff; }
.quick { display: flex; align-items: center; width: 125px; height: 14px; background: #f0f0f0; }
.quick button { width: 14px; height: 14px; }
.quick svg { width: 9px; height: 9px; }
h1 { flex: 1; text-align: center; padding-right: 1px; }
.login { gap: 2px; width: 30px; margin-right: 1px; }
.login svg { width: 8px; height: 8px; }
.wm { display: flex; }
.wm button { width: 25px; height: 14px; }
.wm svg { width: 7px; height: 7px; }
.toolbar { flex: 1; display: flex; align-items: center; justify-content: flex-end; background: #d6d6d6; }
.toolbar button { width: 14px; height: 12px; }
.toolbar svg { width: 10px; height: 10px; }

.ribbon { display: flex; height: 58px; background: #f5f5f5; }
.group { display: flex; flex-direction: column; flex: none; border-right: 1px solid #cfcfcf; }
.group h2 { text-align: center; height: 8px; }
.tools { flex: 1; display: flex; min-height: 0; }
.tool { flex-direction: column; justify-content: flex-start; flex: none; padding-top: 3px; text-align: center; white-space: nowrap; }
.tool svg { width: 15px; height: 15px; margin-bottom: 3px; }
.more::after { content: ""; border: 1px solid transparent; border-top-color: #333; margin-top: 1px; }
.rule { width: 1px; background: #cfcfcf; margin: 1px 0; }
.stack { flex: 1; display: flex; flex-direction: column; align-items: center; }
.stack.three button { width: 20px; height: 16px; }
.stack.three button svg { width: 13px; height: 13px; }
.stack.three .flag { width: 22px; height: 22px; flex: none; border: 2px solid #d22536; margin-bottom: -6px; }
.stack.two { padding-top: 4px; gap: 7px; }
.stack.two svg { width: 17px; height: 17px; }
.marked { width: 85px; outline: 2px solid #d22536; outline-offset: -1px; }
.editgrid { flex: 1; display: grid; grid-template-columns: repeat(7, 1fr); align-content: start; row-gap: 3px; padding: 3px 0 0 1px; }
.editgrid button { height: 20px; }
.editgrid svg { width: 15px; height: 15px; }
.editgrid.one { grid-template-columns: 1fr; }
.one svg { width: 17px; height: 17px; }
.bim { margin-left: auto; border-left: 1px solid #cfcfcf; }
.w20 { width: 20px; } .w23 { width: 23px; } .w26 { width: 26px; } .w28 { width: 28px; } .w30 { width: 30px; }
.w36 { width: 36px; } .w38 { width: 38px; } .w40 { width: 40px; } .w44 { width: 44px; } .w46 { width: 46px; }
.w111 { width: 111px; } .w148 { width: 148px; } .w250 { width: 250px; }

main { flex: 1; display: flex; min-height: 0; }
aside { width: 153px; display: flex; flex-direction: column; }
.panel { flex: 1 1 0; min-height: 0; display: flex; flex-direction: column; }
.panel header, .work header { display: flex; align-items: center; height: 11px; padding: 0 1px 0 2px; background: #d6d6d6; }
.panel h3 { flex: 1; }
.panel header button { width: 11px; height: 11px; }
.panel header svg { width: 8px; height: 8px; }
.ptools { display: flex; align-items: center; height: 12px; }
.ptools button { width: 13px; height: 12px; }
.ptools svg { width: 10px; height: 10px; }
.scrollbox { flex: 1; min-height: 0; display: flex; overflow: hidden; background: #fff; }
.grip { height: 4px; flex: none; background: repeating-linear-gradient(90deg, #aaa 0 1px, transparent 1px 2px) center / 8px 1px no-repeat; }
.tree { flex: 1; display: grid; grid-auto-rows: 1fr; margin: 0; padding: 0; list-style: none; }
.views { height: 107px; }
.read { height: 128px; }
.tree li { display: flex; align-items: center; min-height: 0; padding-left: 23px; }
.tree li.root { padding-left: 4px; }
.tree li.branch { padding-left: 14px; }
.tree li.leaf { padding-left: 34px; }
.tree b { font-weight: 600; padding-left: 3px; }
.tree .branch span { padding-left: 3px; }
.tree b, .tree span { flex: 1; white-space: nowrap; }
.tree svg { width: 6px; height: 6px; }
.tree .root svg + svg { width: 8px; height: 8px; margin-left: 4px; }
.tree .root svg + svg + b { padding-left: 1px; }
.tree button { width: 15px; height: 10px; }
.tree button svg { width: 9px; height: 9px; }
.tree .sel { background: #cce8ff; }
.tree .hover { background: #f4f4f4; }
.tree .nolock { padding-right: 15px; }
.track { width: 9px; padding: 9px 3px 46px; }
.track i { display: block; height: 100%; width: 2px; background: #888; }
.vgrip { width: 4px; background: repeating-linear-gradient(#aaa 0 1px, transparent 1px 2px) center / 1px 8px no-repeat; }
.work { flex: 1; display: flex; flex-direction: column; min-width: 0; }
.wtools { display: flex; align-items: center; justify-content: flex-end; height: 16px; }
.wtools button { width: 13px; height: 14px; }
.wtools svg { width: 10px; height: 10px; }
.scene { flex: 1; width: 100%; min-height: 0; background: #fff; stroke: none; }
.levels text { font-size: 8px; fill: #66747d; }
.axis text { font-size: 7px; font-weight: 700; }
footer { height: 10px; padding-left: 4px; line-height: 10px; }
```
